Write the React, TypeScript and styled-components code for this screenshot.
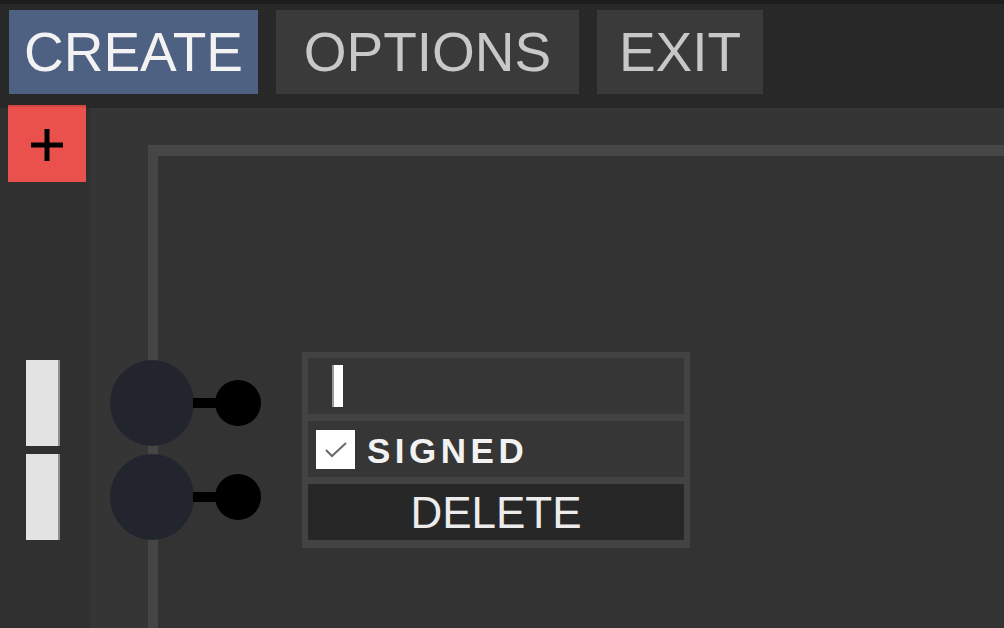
import React from "react";
import styled, { createGlobalStyle } from "styled-components";

const GlobalStyle = createGlobalStyle`
  html, body {
    margin: 0;
    padding: 0;
    background: #333333;
    overflow: hidden;
  }
  body {
    font-family: "Liberation Sans", Arial, sans-serif;
  }
`;

function App() {
  return (
    <>
      <GlobalStyle />
      <Screen>
        <TopStrip />
        <Toolbar>
          <MenuButton $width={249} $active>
            CREATE
          </MenuButton>
          <MenuButton $width={303}>OPTIONS</MenuButton>
          <MenuButton $width={166}>EXIT</MenuButton>
        </Toolbar>
        <Body>
          <Sidebar>
            <AddButton>
              <svg width="32" height="32" viewBox="0 0 32 32">
                <path d="M16 0V32M0 16H32" stroke="#000" strokeWidth="5" />
              </svg>
            </AddButton>
            <Slots>
              <Slot />
              <Slot />
            </Slots>
          </Sidebar>
          <Main>
            <Canvas>
              <Ports>
                <Port>
                  <PortBody />
                  <Wire />
                  <PortTip />
                </Port>
                <Port>
                  <PortBody />
                  <Wire />
                  <PortTip />
                </Port>
              </Ports>
              <Node>
                <Row>
                  <Caret />
                </Row>
                <Row>
                  <Check>
                    <svg width="26" height="20" viewBox="0 0 26 20">
                      <polyline
                        points="3,11 9,17 23,4"
                        fill="none"
                        stroke="#6a6a6a"
                        strokeWidth="2"
                      />
                    </svg>
                  </Check>
                  <CheckLabel>SIGNED</CheckLabel>
                </Row>
                <DeleteRow>DELETE</DeleteRow>
              </Node>
            </Canvas>
          </Main>
        </Body>
      </Screen>
    </>
  );
}

export default App;

const Screen = styled.div`
  width: 1004px;
  height: 628px;
  display: flex;
  flex-direction: column;
  background: #353535;
`;

const TopStrip = styled.div`
  height: 4px;
  background: #1d1d1d;
`;

const Toolbar = styled.div`
  height: 104px;
  box-sizing: border-box;
  background: #282828;
  display: flex;
  align-items: flex-start;
  gap: 18px;
  padding: 6px 0 0 9px;
`;

const MenuButton = styled.div<{ $width: number; $active?: boolean }>`
  width: ${(p) => p.$width}px;
  height: 84px;
  display: flex;
  align-items: center;
  justify-content: center;
  background: ${(p) => (p.$active ? "#4e6183" : "#3a3a3a")};
  color: ${(p) => (p.$active ? "#f2f2f2" : "#c8c8c8")};
  font-size: 55px;
  line-height: 1;
  padding-top: 1px;
  box-sizing: border-box;
`;

const Body = styled.div`
  flex: 1;
  display: flex;
  min-height: 0;
`;

const Sidebar = styled.div`
  width: 90px;
  background: #303030;
  display: flex;
  flex-direction: column;
  align-items: flex-start;
`;

const AddButton = styled.div`
  width: 78px;
  height: 77px;
  margin: -3px 0 0 8px;
  background: #ea514c;
  border-top: 2px solid #d24642;
  box-sizing: border-box;
  display: flex;
  align-items: center;
  justify-content: center;
`;

const Slots = styled.div`
  margin: 178px 0 0 26px;
  display: flex;
  flex-direction: column;
  gap: 8px;
`;

const Slot = styled.div`
  width: 34px;
  height: 86px;
  box-sizing: border-box;
  background: #e3e3e3;
  border-right: 2px solid #8f8f8f;
`;

const Main = styled.div`
  flex: 1;
  display: flex;
  padding: 37px 0 0 58px;
  background: #353535;
`;

const Canvas = styled.div`
  flex: 1;
  position: relative;
  background: #333333;
  border-top: 11px solid #474747;
  border-left: 10px solid #454545;
`;

const Ports = styled.div`
  position: absolute;
  left: -48px;
  top: 204px;
  display: flex;
  flex-direction: column;
  gap: 8px;
`;

const Port = styled.div`
  display: flex;
  align-items: center;
`;

const PortBody = styled.div`
  width: 84px;
  height: 86px;
  border-radius: 50%;
  background: #22252e;
`;

const Wire = styled.div`
  width: 23px;
  height: 10px;
  margin: 0 -1px;
  background: #000;
`;

const PortTip = styled.div`
  width: 46px;
  height: 46px;
  border-radius: 50%;
  background: #000;
`;

const Node = styled.div`
  position: absolute;
  left: 144px;
  top: 196px;
  width: 388px;
  box-sizing: border-box;
  padding: 6px 6px 8px;
  background: #434343;
  display: flex;
  flex-direction: column;
  gap: 7px;
`;

const Row = styled.div`
  height: 56px;
  background: #363636;
  display: flex;
  align-items: center;
  padding-left: 8px;
  box-sizing: border-box;
`;

const Caret = styled.span`
  width: 11px;
  height: 42px;
  margin-left: 16px;
  background: #ffffff;
  border-left: 2px solid #9a9a9a;
  box-sizing: border-box;
`;

const Check = styled.span`
  width: 39px;
  height: 39px;
  background: #ffffff;
  display: flex;
  align-items: center;
  justify-content: center;
`;

const CheckLabel = styled.span`
  margin-left: 12px;
  color: #f2f2f2;
  font-size: 35px;
  font-weight: 700;
  letter-spacing: 4.5px;
  line-height: 1;
  padding-top: 2px;
`;

const DeleteRow = styled.div`
  height: 56px;
  background: #272727;
  color: #ececec;
  font-size: 44px;
  line-height: 1;
  display: flex;
  align-items: center;
  justify-content: center;
  padding-top: 2px;
  box-sizing: border-box;
`;
